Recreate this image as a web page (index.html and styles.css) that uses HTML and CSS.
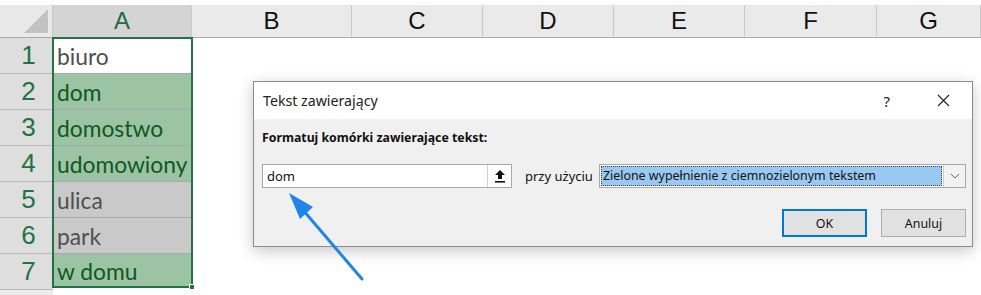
FILE: index.html
```html
<!DOCTYPE html>
<html lang="pl">
<head>
    <meta charset="UTF-8">
    <title>Tekst zawierający</title>
    <link rel="stylesheet" href="styles.css">
</head>
<body>
    <div class="sheet">
        <div class="rownums">
            <div class="corner"><span class="corner-tri"></span></div>
            <div class="rownum">1</div>
            <div class="rownum">2</div>
            <div class="rownum">3</div>
            <div class="rownum">4</div>
            <div class="rownum">5</div>
            <div class="rownum">6</div>
            <div class="rownum">7</div>
            <div class="rownum plain">8</div>
        </div>

        <div class="col col-a">
            <div class="col-head sel">A</div>
            <div class="range">
                <div class="cell active">biuro</div>
                <div class="cell match">dom</div>
                <div class="cell match">domostwo</div>
                <div class="cell match">udomowiony</div>
                <div class="cell">ulica</div>
                <div class="cell">park</div>
                <div class="cell match">w domu</div>
                <span class="handle"></span>
            </div>
        </div>

        <div class="col col-b"><div class="col-head">B</div></div>
        <div class="col"><div class="col-head">C</div></div>
        <div class="col"><div class="col-head">D</div></div>
        <div class="col"><div class="col-head">E</div></div>
        <div class="col col-f"><div class="col-head">F</div></div>
        <div class="col col-g"><div class="col-head">G</div></div>
    </div>

    <!-- Conditional formatting dialog -->
    <div class="dialog">
        <div class="dialog-title">
            <span>Tekst zawierający</span>
            <div class="title-btns">
                <span class="help">?</span>
                <svg class="close" width="13" height="13" viewBox="0 0 13 13">
                    <path d="M1 1 L12 12 M12 1 L1 12" stroke="#222" stroke-width="1.1" fill="none"/>
                </svg>
            </div>
        </div>
        <div class="dialog-body">
            <p class="label">Formatuj komórki zawierające tekst:</p>
            <div class="form-row">
                <div class="ref-input">
                    <span class="ref-text">dom</span>
                    <span class="ref-btn">
                        <svg width="12" height="14" viewBox="0 0 12 14">
                            <path d="M6 1 L11 6 L8 6 L8 10 L4 10 L4 6 L1 6 Z" fill="#111"/>
                            <rect x="1" y="12" width="10" height="1.6" fill="#111"/>
                        </svg>
                    </span>
                </div>
                <span class="using">przy użyciu</span>
                <div class="select">
                    <span class="select-text"><span class="select-hl">Zielone wypełnienie z ciemnozielonym tekstem</span></span>
                    <span class="select-btn">
                        <svg width="10" height="6" viewBox="0 0 10 6">
                            <path d="M1 1 L5 5 L9 1" stroke="#666" stroke-width="1" fill="none"/>
                        </svg>
                    </span>
                </div>
            </div>
            <div class="buttons">
                <button class="btn default">OK</button>
                <button class="btn">Anuluj</button>
            </div>
        </div>
    </div>

    <svg class="pointer" width="981" height="295" viewBox="0 0 981 295">
        <line x1="362" y1="279" x2="297" y2="203" stroke="#1f85e6" stroke-width="3" stroke-linecap="round"/>
        <polygon points="289,193 300,219 313,207" fill="#1f85e6"/>
    </svg>
</body>
</html>
```

FILE: styles.css
```css
* {
    margin: 0;
    padding: 0;
    box-sizing: border-box;
}

body {
    background: #fff;
    font-family: 'Liberation Sans', Arial, sans-serif;
    width: 981px;
    height: 295px;
    overflow: hidden;
    position: relative;
}

/* Sheet */
.sheet {
    display: flex;
    padding-top: 5px;
}

.rownums {
    width: 53px;
    flex: none;
    display: flex;
    flex-direction: column;
}

.corner {
    height: 33px;
    background: #e9e9e9;
    border-bottom: 1px solid #a9a9a9;
    border-right: 1px solid #c6c6c6;
    position: relative;
}

.corner-tri {
    position: absolute;
    right: 4px;
    bottom: 4px;
    width: 0;
    height: 0;
    border-left: 24px solid transparent;
    border-bottom: 24px solid #c2c2c2;
}

.rownum {
    height: 36px;
    background: #dedede;
    border-bottom: 1px solid #b9b9b9;
    color: #217346;
    font-size: 26px;
    display: flex;
    align-items: center;
    justify-content: center;
    padding-left: 4px;
}

.rownum.plain {
    height: 20px;
    align-items: flex-start;
    padding-top: 6px;
    background: #ececec;
    color: #333;
    overflow: hidden;
}

.col {
    width: 131px;
    flex: none;
}

.col-a { width: 139px; }
.col-b { width: 160px; }
.col-f { width: 132px; }
.col-g { flex: 1; }

.col-head {
    height: 33px;
    background: #eaeaea;
    border-right: 1px solid #c9c9c9;
    border-bottom: 1px solid #a9a9a9;
    font-size: 24px;
    color: #111;
    display: flex;
    align-items: center;
    justify-content: center;
}

.col-head.sel {
    background: #d4d4d4;
    color: #1d6b40;
    border-bottom: 1px solid #217346;
}

.range {
    position: relative;
    outline: 2px solid #217346;
    outline-offset: -1px;
    height: 249px;
    display: flex;
    flex-direction: column;
}

.cell {
    height: 36px;
    flex: none;
    background: #c9c9c9;
    border-bottom: 1px solid #a9a9a9;
    color: #4f4f4f;
    font-family: 'Lato', 'Liberation Sans', sans-serif;
    font-size: 22.8px;
    padding-left: 4px;
    display: flex;
    align-items: center;
    white-space: nowrap;
}

.cell:last-of-type {
    height: 33px;
    border-bottom: none;
}

.cell.active {
    background: #fff;
}

.cell.match {
    background: #9dc3a5;
    color: #0d5a1c;
}

.handle {
    position: absolute;
    right: -3px;
    bottom: -3px;
    width: 6px;
    height: 6px;
    background: #217346;
    border: 1px solid #fff;
}

/* Dialog */
.dialog {
    position: absolute;
    left: 253px;
    top: 81px;
    width: 720px;
    height: 166px;
    background: #f0f0f0;
    border: 1px solid #8a8a8a;
    box-shadow: 0 4px 14px rgba(0, 0, 0, 0.22);
    font-family: 'Noto Sans', 'Open Sans', sans-serif;
    font-size: 12.4px;
    color: #111;
}

.dialog-title {
    height: 37px;
    background: #fff;
    display: flex;
    align-items: center;
    justify-content: space-between;
    padding-left: 9px;
    font-size: 14.2px;
    color: #222;
}

.title-btns {
    display: flex;
    align-items: center;
}

.help {
    font-size: 15px;
    margin-right: 47px;
}

.close {
    margin-right: 22px;
}

.dialog-body {
    padding: 10px 6px 0 8px;
}

.label {
    font-weight: bold;
    font-size: 12.3px;
    margin-bottom: 18px;
}

.form-row {
    display: flex;
    align-items: center;
    white-space: nowrap;
}

.ref-input {
    width: 250px;
    height: 24px;
    background: #fff;
    border: 1px solid #a8a8a8;
    display: flex;
    align-items: center;
    font-size: 13px;
}

.ref-text {
    flex: 1;
    padding-left: 4px;
}

.ref-btn {
    width: 24px;
    height: 22px;
    border-left: 1px solid #d0d0d0;
    display: flex;
    align-items: center;
    justify-content: center;
}

.using {
    flex: 1;
    font-size: 13px;
    padding-left: 13px;
}

.select {
    width: 367px;
    height: 24px;
    background: #fff;
    border: 1px solid #a8a8a8;
    display: flex;
    align-items: stretch;
}

.select-text {
    flex: 1;
    padding: 1px;
    display: flex;
}

.select-hl {
    flex: 1;
    background: #99c9f2;
    border: 1px dotted #444;
    padding-left: 1px;
    line-height: 18px;
}

.select-btn {
    width: 22px;
    background: #f2f2f2;
    border-left: 1px solid #cfcfcf;
    display: flex;
    align-items: center;
    justify-content: center;
}

.buttons {
    display: flex;
    justify-content: flex-end;
    gap: 14px;
    margin-top: 21px;
}

.btn {
    width: 85px;
    height: 28px;
    background: #e1e1e1;
    border: 1px solid #adadad;
    font-family: 'Noto Sans', 'Open Sans', sans-serif;
    font-size: 12.4px;
    color: #111;
}

.btn.default {
    border: 2px solid #0078d7;
}

/* Blue pointer arrow */
.pointer {
    position: absolute;
    left: 0;
    top: 0;
    pointer-events: none;
}
```
